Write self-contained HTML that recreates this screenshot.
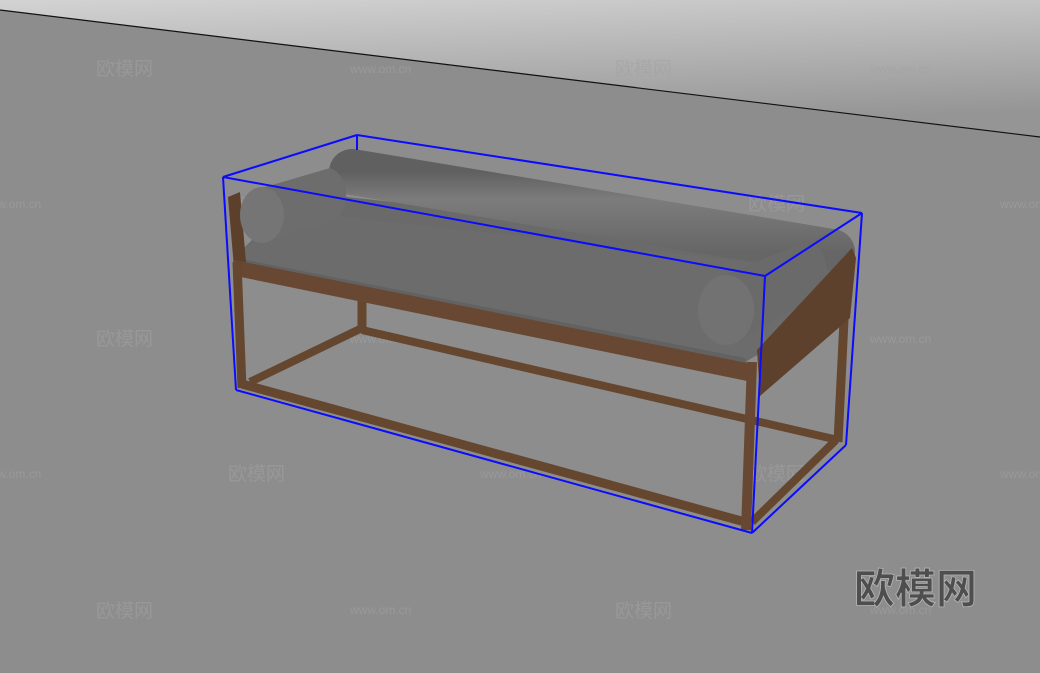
<!DOCTYPE html>
<html><head><meta charset="utf-8"><style>
html,body{margin:0;padding:0;width:1040px;height:673px;overflow:hidden;background:#8d8d8d}
svg{display:block}
.wm{font-family:"Liberation Sans","Noto Sans CJK SC",sans-serif;font-size:19px;fill:#a2a2a2;fill-opacity:.55}
.ws{font-family:"Liberation Sans",sans-serif;font-size:12px;fill:#a2a2a2;fill-opacity:.6}
</style></head><body>
<svg width="1040" height="673" viewBox="0 0 1040 673" xmlns="http://www.w3.org/2000/svg">
<defs>
<linearGradient id="wall" x1="0" y1="0" x2="0.25" y2="1">
<stop offset="0" stop-color="#d3d3d3"/><stop offset="1" stop-color="#959595"/>
</linearGradient>
<linearGradient id="bol" x1="0" y1="0" x2="0" y2="1">
<stop offset="0" stop-color="#606060"/><stop offset=".35" stop-color="#7c7c7c"/><stop offset="1" stop-color="#666"/>
</linearGradient>
</defs>
<rect width="1040" height="673" fill="#8d8d8d"/>
<polygon points="0,0 1040,0 1040,137 0,10" fill="url(#wall)"/>
<line x1="0" y1="10" x2="1040" y2="137" stroke="#111" stroke-width="1.2"/>

<g class="wm">
<text x="96" y="75">欧模网</text><text x="615" y="75">欧模网</text>
<text x="228" y="210">欧模网</text><text x="748" y="210">欧模网</text>
<text x="96" y="345">欧模网</text><text x="615" y="345">欧模网</text>
<text x="228" y="480">欧模网</text><text x="748" y="480">欧模网</text>
<text x="96" y="617">欧模网</text><text x="615" y="617">欧模网</text>
</g>
<g class="ws">
<text x="350" y="73">www.om.cn</text><text x="870" y="73">www.om.cn</text>
<text x="-20" y="208">www.om.cn</text><text x="480" y="208">www.om.cn</text><text x="1000" y="208">www.om.cn</text>
<text x="350" y="343">www.om.cn</text><text x="870" y="343">www.om.cn</text>
<text x="-20" y="478">www.om.cn</text><text x="480" y="478">www.om.cn</text><text x="1000" y="478">www.om.cn</text>
<text x="350" y="614">www.om.cn</text><text x="870" y="614">www.om.cn</text>
</g>

<g stroke="#65462f" stroke-linecap="butt" fill="none">
<line x1="362" y1="300" x2="362" y2="330" stroke-width="9"/>
<line x1="362" y1="330" x2="838" y2="440" stroke-width="8"/>
<line x1="845" y1="300" x2="838" y2="442" stroke-width="9"/>
<line x1="250" y1="382" x2="362" y2="328" stroke-width="8"/>
<line x1="836" y1="440" x2="752" y2="522" stroke-width="8"/>
<line x1="242" y1="384" x2="745" y2="522" stroke-width="9"/>
</g>

<polygon points="240,252 300,192 842,250 800,330 745,362 236,262" fill="#6a6a6a"/>
<line x1="352" y1="172" x2="832" y2="252" stroke="url(#bol)" stroke-width="46" stroke-linecap="round"/>
<polygon points="240,252 300,212 842,272 800,330 745,362 236,262" fill="#6c6c6c"/>
<polygon points="236,258 745,358 748,366 236,266" fill="#626262"/>
<polygon points="228,197 240,192 246,262 234,268" fill="#5c402c"/>
<path d="M262,188 L330,168 A22,28 0 0 1 330,222 L262,242 Z" fill="#6d6d6d"/>
<ellipse cx="262" cy="215" rx="22" ry="28" fill="#757575"/>
<path d="M725,275 L810,240 A28,34 0 0 1 818,296 L730,345 Z" fill="#6a6a6a"/>
<ellipse cx="726" cy="310" rx="28" ry="35" fill="#727272"/>
<polygon points="234,260 752,364 752,382 236,276" fill="#684832"/>
<polygon points="757,350 852,248 856,258 850,318 760,396" fill="#5e412d"/>
<line x1="237" y1="262" x2="242" y2="388" stroke="#65462f" stroke-width="9"/>
<line x1="752" y1="362" x2="746" y2="530" stroke="#684832" stroke-width="10"/>

<g stroke="#0b0bff" stroke-width="2" fill="none">
<line x1="357" y1="135" x2="862" y2="213"/>
<line x1="357" y1="135" x2="223" y2="177"/>
<line x1="223" y1="177" x2="765" y2="276"/>
<line x1="765" y1="276" x2="862" y2="213"/>
<line x1="223" y1="177" x2="236" y2="390"/>
<line x1="236" y1="390" x2="752" y2="533"/>
<line x1="752" y1="533" x2="846" y2="445"/>
<line x1="846" y1="445" x2="862" y2="213"/>
<line x1="765" y1="276" x2="752" y2="533"/>
<line x1="357" y1="135" x2="357" y2="150"/>
</g>

<text x="854" y="603" font-family="'Noto Sans CJK SC','WenQuanYi Zen Hei',sans-serif" font-size="41" font-weight="bold" fill="#4e4e4e" stroke="#b5b5b5" stroke-width=".8">欧模网</text>
</svg>
</body></html>
